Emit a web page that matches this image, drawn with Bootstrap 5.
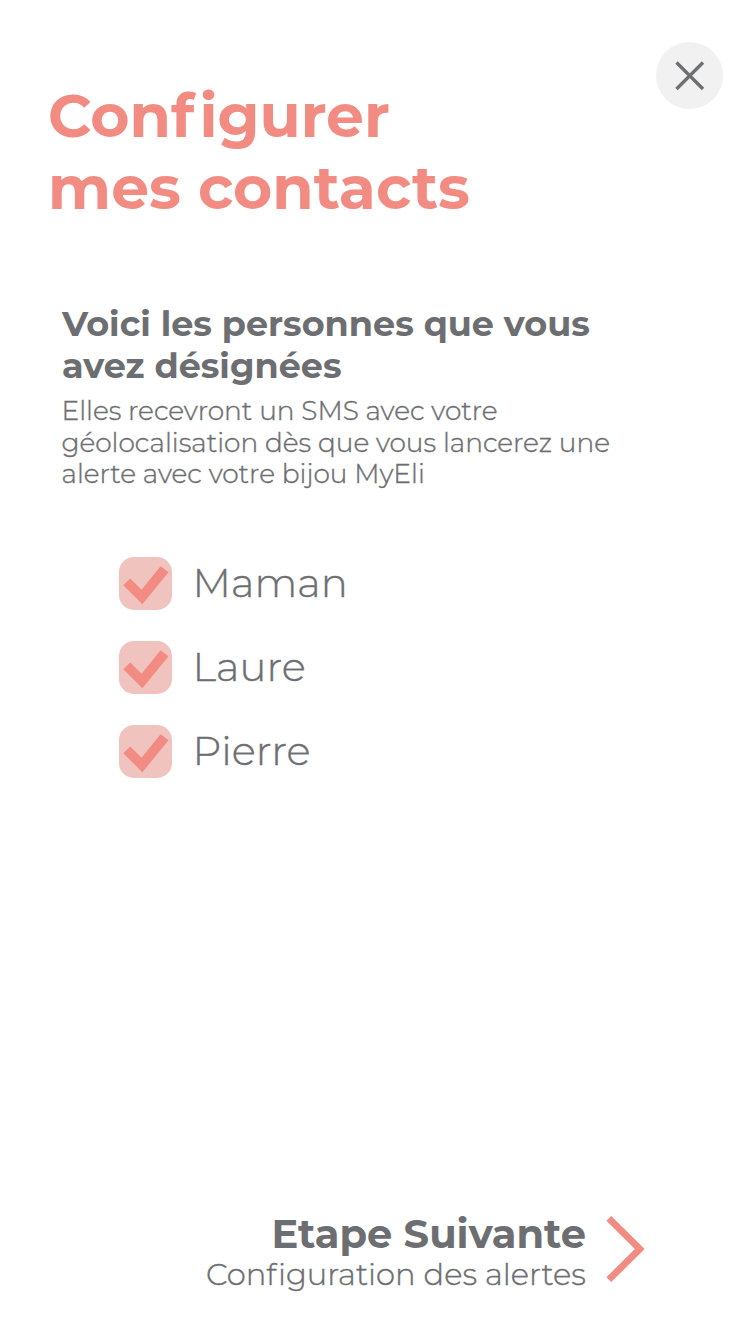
<!DOCTYPE html>
<html lang="fr">
<head>
<meta charset="utf-8">
<meta name="viewport" content="width=device-width, initial-scale=1">
<title>Configurer mes contacts</title>
<link href="https://cdn.jsdelivr.net/npm/bootstrap@5.3.0/dist/css/bootstrap.min.css" rel="stylesheet">
<style>
  :root { --coral: #f28b82; --ink: #6d6e71; }
  body { font-family: Montserrat, Inter, "Liberation Sans", sans-serif; font-weight: 300; color: var(--ink); font-variant-ligatures: none; }
  .screen { height: 1334px; padding: 42px 27px 40px 48px; }
  .page-title { color: var(--coral); font-size: 60px; line-height: 72px; padding-top: 38px; }
  /* opens up the f-i pair */
  .loose { letter-spacing: .085em; }
  .step-detail .loose { letter-spacing: .05em; }
  /* firms up the light weight */
  .intro p, .contact-name, .step-detail { -webkit-text-stroke: .4px var(--ink); }
  .btn-round { width: 67px; height: 67px; background: #f1f1f1; }
  .intro { margin: 79px 0 0 14px; }
  .intro h2 { font-size: 35px; line-height: 42px; }
  .intro p { font-size: 26.4px; line-height: 31.6px; margin: 8px 0 0 -.5px; }
  .contacts { margin: 67px 0 0 71px; gap: 31px; }
  .contact-name { font-size: 40.2px; line-height: 51px; padding-bottom: 2px; margin-left: 20.6px; }
  .tick-box { background: #f1c3bf; border-radius: 15px; width: 53px; height: 53px; }
  .next-step { margin-right: 78px; gap: 20px; }
  .next-step svg { margin-bottom: 8px; }
  .step-title { font-size: 40px; line-height: 44px; }
  .step-detail { font-size: 30.6px; line-height: 36px; padding-bottom: 2px; }
</style>
<script src="https://cdn.jsdelivr.net/npm/bootstrap@5.3.0/dist/js/bootstrap.bundle.min.js"></script>
</head>
<body class="bg-white">
<main class="screen d-flex flex-column">
  <header class="d-flex justify-content-between align-items-start">
    <h1 class="page-title fw-bold m-0">Con<span class="loose">f</span>igurer<br>mes contacts</h1>
    <button type="button" class="btn-round border-0 rounded-circle p-0 d-flex" aria-label="Fermer">
      <svg width="67" height="67" viewBox="0 0 67 67" fill="none" stroke="#6d6e71" stroke-width="3.3"><path d="M20.5 20.5 47 47M47 20.5 20.5 47"/></svg>
    </button>
  </header>

  <section class="intro">
    <h2 class="fw-bold m-0">Voici les personnes que vous<br>avez désignées</h2>
    <p>Elles recevront un SMS avec votre<br>géolocalisation dès que vous lancerez une<br>alerte avec votre bijou MyEli</p>
  </section>

  <ul class="contacts list-unstyled d-flex flex-column">
    <li class="d-flex align-items-center">
      <span class="tick-box d-flex"><svg width="53" height="53" viewBox="0 0 53 53" fill="#f28b82"><path d="M4.3 28.3 11.3 21.5 22.5 32.8 41.6 9.3 49.5 15.3 23.4 47.3Z"/></svg></span>
      <span class="contact-name">Maman</span>
    </li>
    <li class="d-flex align-items-center">
      <span class="tick-box d-flex"><svg width="53" height="53" viewBox="0 0 53 53" fill="#f28b82"><path d="M4.3 28.3 11.3 21.5 22.5 32.8 41.6 9.3 49.5 15.3 23.4 47.3Z"/></svg></span>
      <span class="contact-name">Laure</span>
    </li>
    <li class="d-flex align-items-center">
      <span class="tick-box d-flex"><svg width="53" height="53" viewBox="0 0 53 53" fill="#f28b82"><path d="M4.3 28.3 11.3 21.5 22.5 32.8 41.6 9.3 49.5 15.3 23.4 47.3Z"/></svg></span>
      <span class="contact-name">Pierre</span>
    </li>
  </ul>

  <a class="next-step mt-auto d-flex align-items-center justify-content-end text-reset text-decoration-none" href="#">
    <span class="d-flex flex-column text-end">
      <strong class="step-title fw-bold">Etape Suivante</strong>
      <span class="step-detail">Con<span class="loose">f</span>iguration des alertes</span>
    </span>
    <svg width="39" height="68" viewBox="0 0 39 68" fill="none" stroke="#f28b82" stroke-width="6.8"><path d="M2.8 3.3 33.8 34 2.8 64.7"/></svg>
  </a>
</main>
</body>
</html>
